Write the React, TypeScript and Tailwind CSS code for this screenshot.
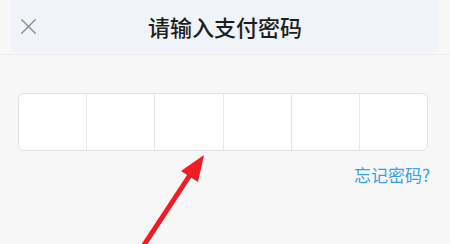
import { X } from "lucide-react";

const cells = [0, 1, 2, 3, 4, 5];

export default function App() {
  return (
    <div
      className="relative h-[244px] w-[450px] overflow-hidden bg-[#f7f7f7]"
      style={{ fontFamily: '"Noto Sans CJK SC", "Noto Sans", sans-serif' }}
    >
      <div className="border-b border-[#ececec] pb-[2px]">
        <div className="mx-[11px] flex h-[52px] items-center rounded-b-md bg-[#f0f4f8] px-[4px]">
          <X className="h-[27px] w-[27px] text-[#8a8a8a]" strokeWidth={1.2} />
          <div className="flex-1 pr-[27px] text-center text-[22px] font-medium leading-none text-[#1e1e1e]">请输入支付密码</div>
        </div>
      </div>

      <div className="px-[18px] pt-[38px]">
        <div className="flex h-[58px] w-[410px] overflow-hidden rounded-md border border-[#e3e3e3] bg-white">
          {cells.map((i) => (
            <div key={i} className={`flex-1 ${i < 5 ? "border-r border-[#e6e6e6]" : ""}`} />
          ))}
        </div>
        <div className="mt-[15px] flex justify-end pr-[2px] text-[17px] leading-none text-[#3a9fe6]">忘记密码?</div>
      </div>

      <svg className="absolute left-0 top-0" width="450" height="244" viewBox="0 0 450 244">
        <line x1="142" y1="248" x2="192" y2="172" stroke="#ee1c25" strokeWidth="5" />
        <polygon points="204,155 181,171 198,182" fill="#ee1c25" />
      </svg>
    </div>
  );
}
